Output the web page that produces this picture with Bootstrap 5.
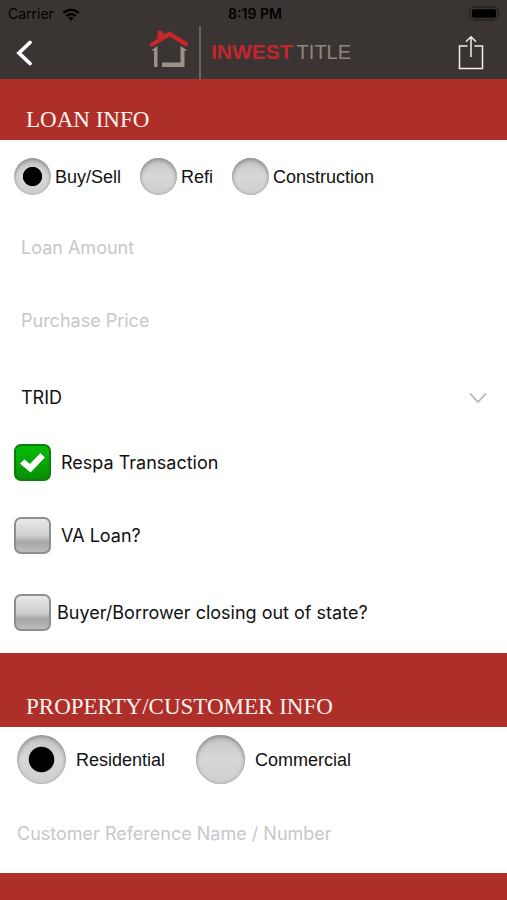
<!DOCTYPE html>
<html lang="en">
<head>
<meta charset="utf-8">
<meta name="viewport" content="width=device-width, initial-scale=1">
<title>Inwest Title</title>
<link href="https://cdn.jsdelivr.net/npm/bootstrap@5.3.0/dist/css/bootstrap.min.css" rel="stylesheet">
<style>
  body { font-family: Inter, "Liberation Sans", sans-serif; font-size: 18px; line-height: 24px; color: #111; background: #fff; }
  .top-area { background: #3a3533; }
  .status-bar { height: 26px; padding: 2px 5px 0 8px; font-size: 14px; color: #000; }
  .status-bar > * { flex: 1 1 0; }
  .status-time { font-weight: 600; }
  .title-bar { height: 53px; padding: 0 23px 0 14px; }
  .brand-logo { font-family: "Liberation Sans", sans-serif; gap: 10px; margin-left: 6px; }
  .brand-rule { width: 2px; background: #6b6561; }
  .brand-name { font-size: 21px; gap: 4px; padding-bottom: 2px; }
  .brand-strong { color: #c4252c; font-weight: 700; }
  .brand-light { color: #8f867e; font-size: 20px; }
  .section-head { background: #ae2e2a; padding: 0 26px 5px; }
  .section-head h2 { font-family: "Liberation Serif", serif; font-size: 23px; line-height: 30px; color: #fff3ee; }
  .head-first { height: 61px; }
  .head-next { height: 74px; }
  .head-end { min-height: 27px; }
  .field-row { display: flex; align-items: center; min-height: 37px; }
  .loan-form { padding: 18px 14px 22px; }
  .choice-row { font-family: "Liberation Sans", sans-serif; gap: 19px; }
  .choice { display: flex; align-items: center; gap: 4px; }
  .choice-wide { gap: 31px; }
  .choice-wide .choice, .tick-row { gap: 10px; }
  .tick-row-near { gap: 6px; }
  .gap-small { margin-top: 28px; }
  .gap-first { margin-top: 34px; }
  .gap-mid { margin-top: 36px; }
  .gap-large { margin-top: 40px; }
  .plain-field { width: 100%; height: 37px; border: 0; padding: 0 7px; background-color: transparent; color: #111; outline-offset: 2px; }
  .plain-field::placeholder { color: #c7c7c9; opacity: 1; }
  .pick-field { appearance: none; background: url("data:image/svg+xml,%3Csvg xmlns='http://www.w3.org/2000/svg' width='20' height='12'%3E%3Cpath d='M2 1.500l8 8.500 8-8.500' fill='none' stroke='%23b4b4b4' stroke-width='1.800'/%3E%3C/svg%3E") no-repeat right 5px center; }
  .knob { appearance: none; flex: none; width: 37px; height: 37px; border-radius: 50%; margin: 0;
    background: linear-gradient(#c4c4c4, #d8d8d8 50%, #cdcdcd);
    box-shadow: inset 0 2px 4px #8a8a8a, inset 0 0 2px #aaa; }
  .knob:checked { background: radial-gradient(circle closest-side, #000 50%, transparent 54%), linear-gradient(#c4c4c4, #d8d8d8 50%, #cdcdcd); }
  .knob-big { width: 49px; height: 49px; }
  .tick { appearance: none; flex: none; width: 37px; height: 37px; margin: 0; border: 2px solid #8f8f8f; border-radius: 7px;
    background: linear-gradient(#ececec, #cfcfcf 50%, #a6a6a6 68%, #c2c2c2); background-origin: border-box; }
  .tick:checked { border-color: #0a7d0d;
    background: url("data:image/svg+xml,%3Csvg xmlns='http://www.w3.org/2000/svg' viewBox='0 0 37 37'%3E%3Cpath d='M6.500 19.500l4-3.500 5.500 4.500L26.500 9.500l4 4L16.500 28z' fill='%23fff' stroke='%23fff' stroke-linejoin='round'/%3E%3C/svg%3E") center / 37px 37px no-repeat, linear-gradient(#06bd06, #08a808 50%, #078a07); background-origin: border-box; }
  .customer-form { padding: 8px 17px 21px; }
  .customer-form .plain-field { padding: 0; }
  .reference-row { margin-top: 31px; }
</style>
</head>
<body class="d-flex flex-column min-vh-100">
<header class="top-area">
  <div class="status-bar d-flex align-items-center">
    <div class="d-flex align-items-center gap-2">
      <span>Carrier</span>
      <svg width="18" height="13" viewBox="0 0 18 13" aria-hidden="true"><g fill="none" stroke="#000" stroke-width="2.300"><path d="M1.300 5a11 11 0 0 1 15.400 0M4.300 8.100a6.700 6.700 0 0 1 9.400 0"/></g><path d="M6.300 10a4 4 0 0 1 5.400 0L9 12.800z"/></svg>
    </div>
    <div class="status-time text-center">8:19 PM</div>
    <div class="d-flex justify-content-end">
      <svg width="33" height="16" viewBox="0 0 33 16" role="img" aria-label="Battery full"><rect x=".8" y="1.300" width="28" height="12.400" rx="4" fill="none" stroke="#25211f" stroke-width="1.500"/><rect x="3" y="3.300" width="24" height="8.500" rx="2"/><path d="M30.500 5.500v4q2-2 0-4z" fill="#25211f"/></svg>
    </div>
  </div>
  <nav class="title-bar d-flex justify-content-between align-items-stretch" aria-label="Main">
    <button type="button" class="btn p-0 border-0" aria-label="Back">
      <svg width="22" height="30" viewBox="0 0 22 30"><path d="M16 4.500L5 15l11 10.500" fill="none" stroke="#fff" stroke-width="3.800" stroke-linecap="round"/></svg>
    </button>
    <div class="brand-logo d-flex">
      <svg class="align-self-center" width="40" height="45" viewBox="0 0 40 45" aria-hidden="true">
        <path d="M1 16.500V13.500L8.500 8.500V.500L13.500 1 14.500 4.500 20.500 1.500 38.700 12.500v3.500H36L20.500 6.500 4 16.500z" fill="#c9252b"/>
        <path d="M2 20.500L8.500 16v21H5V20.500zM38.500 20.500l-7-4.500v16.500H13V37h22.500V20.500z" fill="#9b9186"/>
      </svg>
      <div class="brand-rule"></div>
      <div class="brand-name d-flex align-items-center"><span class="brand-strong">INWEST</span><span class="brand-light">TITLE</span></div>
    </div>
    <button type="button" class="btn p-0 border-0" aria-label="Share">
      <svg width="26" height="36" viewBox="0 0 26 36"><path d="M9.500 11H1.500v22.500h23V11h-8M13 22V2M8 6.800l5-5 5 5" fill="none" stroke="#f1eeeb" stroke-width="1.500"/></svg>
    </button>
  </nav>
</header>
<main class="d-flex flex-column flex-grow-1">
  <div class="section-head head-first d-flex align-items-end"><h2 class="m-0">LOAN INFO</h2></div>
  <form class="loan-form">
    <div class="field-row choice-row" role="radiogroup" aria-label="Loan type">
      <div class="choice"><input class="knob" type="radio" name="loan" id="buy" checked><label for="buy">Buy/Sell</label></div>
      <div class="choice"><input class="knob" type="radio" name="loan" id="refi"><label for="refi">Refi</label></div>
      <div class="choice"><input class="knob" type="radio" name="loan" id="construction"><label for="construction">Construction</label></div>
    </div>
    <div class="field-row gap-first"><input class="plain-field" type="text" aria-label="Loan Amount" placeholder="Loan Amount"></div>
    <div class="field-row gap-mid"><input class="plain-field" type="text" aria-label="Purchase Price" placeholder="Purchase Price"></div>
    <div class="field-row gap-large"><select class="plain-field pick-field" aria-label="Disclosure type"><option>TRID</option></select></div>
    <div class="field-row tick-row gap-small"><input class="tick" type="checkbox" id="respa" checked><label for="respa">Respa Transaction</label></div>
    <div class="field-row tick-row gap-mid"><input class="tick" type="checkbox" id="va"><label for="va">VA Loan?</label></div>
    <div class="field-row tick-row-near gap-large"><input class="tick" type="checkbox" id="state"><label for="state">Buyer/Borrower closing out of state?</label></div>
  </form>
  <div class="section-head head-next d-flex align-items-end"><h2 class="m-0">PROPERTY/CUSTOMER INFO</h2></div>
  <form class="customer-form">
    <div class="field-row choice-row choice-wide" role="radiogroup" aria-label="Property type">
      <div class="choice"><input class="knob knob-big" type="radio" name="property" id="residential" checked><label for="residential">Residential</label></div>
      <div class="choice"><input class="knob knob-big" type="radio" name="property" id="commercial"><label for="commercial">Commercial</label></div>
    </div>
    <div class="field-row reference-row"><input class="plain-field" type="text" aria-label="Customer Reference Name / Number" placeholder="Customer Reference Name / Number"></div>
  </form>
  <div class="section-head head-end flex-grow-1"></div>
</main>
<script src="https://cdn.jsdelivr.net/npm/bootstrap@5.3.0/dist/js/bootstrap.bundle.min.js"></script>
</body>
</html>
